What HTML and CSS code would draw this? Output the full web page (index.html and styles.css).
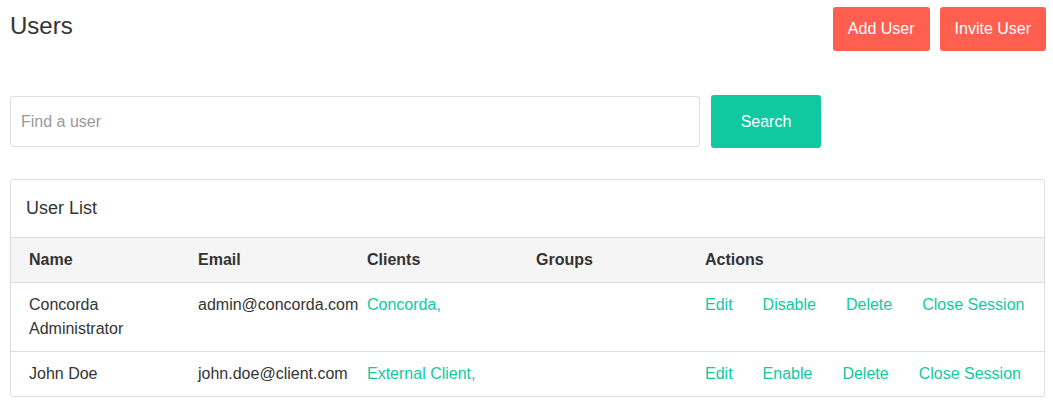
FILE: index.html
```html
<!DOCTYPE html>
<html lang="en">
<head>
<meta charset="utf-8">
<title>Users</title>
<link rel="stylesheet" href="styles.css">
</head>
<body>
  <div class="topbar">
    <h1 class="title">Users</h1>
    <div class="top-actions">
      <button class="btn btn-red">Add User</button>
      <button class="btn btn-red">Invite User</button>
    </div>
  </div>

  <div class="search-row">
    <input class="search-input" type="text" placeholder="Find a user">
    <button class="btn btn-teal">Search</button>
  </div>

  <div class="card">
    <div class="card-header">User List</div>
    <table class="user-table">
      <colgroup>
        <col class="c-std"><col class="c-std"><col class="c-std"><col class="c-std"><col>
      </colgroup>
      <thead>
        <tr><th>Name</th><th>Email</th><th>Clients</th><th>Groups</th><th>Actions</th></tr>
      </thead>
      <tbody>
        <tr>
          <td>Concorda Administrator</td>
          <td>admin@concorda.com</td>
          <td><a class="link" href="#">Concorda,</a></td>
          <td></td>
          <td class="actions"><a class="link" href="#">Edit</a><a class="link" href="#">Disable</a><a class="link" href="#">Delete</a><a class="link" href="#">Close Session</a></td>
        </tr>
        <tr>
          <td>John Doe</td>
          <td>john.doe@client.com</td>
          <td><a class="link" href="#">External Client,</a></td>
          <td></td>
          <td class="actions"><a class="link" href="#">Edit</a><a class="link" href="#">Enable</a><a class="link" href="#">Delete</a><a class="link" href="#">Close Session</a></td>
        </tr>
      </tbody>
    </table>
  </div>
</body>
</html>
```

FILE: styles.css
```css
* { box-sizing: border-box; }

html, body {
  background: #ffffff;
}

body {
  margin: 0;
  padding: 7px 7px 0 10px;
  font-family: "Liberation Sans", Arial, sans-serif;
  font-size: 16px;
  color: #333333;
}

.topbar {
  display: flex;
  justify-content: space-between;
  align-items: flex-start;
}

.title {
  margin: 5px 0 0 0;
  font-size: 24px;
  font-weight: normal;
  line-height: 28px;
  color: #333333;
}

.top-actions {
  display: flex;
  gap: 10px;
}

.btn {
  border: none;
  border-radius: 3px;
  font-family: "Liberation Sans", Arial, sans-serif;
  font-size: 16px;
  color: #ffffff;
  padding: 0 15px;
  cursor: pointer;
}

.btn-red {
  height: 44px;
  line-height: 44px;
  background: #ff5f4e;
}

.search-row {
  display: flex;
  align-items: center;
  gap: 11px;
  margin-top: 44px;
}

.search-input {
  width: 690px;
  height: 51px;
  border: 1px solid #dddddd;
  border-radius: 3px;
  padding: 0 10px;
  font-family: "Liberation Sans", Arial, sans-serif;
  font-size: 16px;
  color: #333333;
  outline: none;
}

.search-input::placeholder {
  color: #999999;
}

.btn-teal {
  width: 110px;
  height: 53px;
  padding-top: 1px;
  background: #10c9a1;
}

.card {
  margin-top: 31px;
  margin-right: 1px;
  border: 1px solid #dddddd;
  border-radius: 3px;
  overflow: hidden;
}

.card-header {
  padding: 15px 15px;
  font-size: 18px;
  line-height: 27px;
  border-bottom: 1px solid #dddddd;
  color: #333333;
}

.user-table {
  width: 100%;
  border-collapse: collapse;
  table-layout: fixed;
}

.c-std { width: 169px; }

.user-table th,
.user-table td {
  text-align: left;
  vertical-align: top;
  padding: 10px 10px 10px 18px;
  line-height: 24px;
  font-size: 16px;
}

.user-table thead tr {
  background: #f5f5f5;
}

.user-table th {
  font-weight: bold;
  color: #333333;
  border-bottom: 1px solid #dddddd;
}

.user-table tbody tr + tr td {
  border-top: 1px solid #dddddd;
}

.link {
  color: #10c9a1;
  text-decoration: none;
}

.actions {
  white-space: nowrap;
}

.actions .link {
  margin-right: 30px;
}
```
